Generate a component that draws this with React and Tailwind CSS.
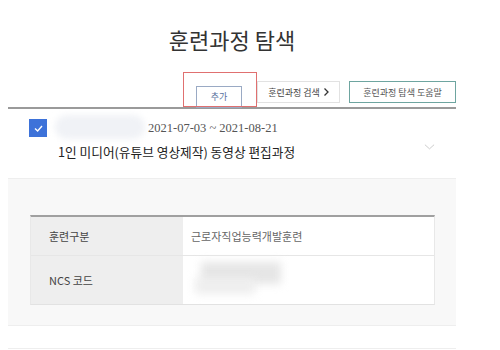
import React from "react";

const font = { fontFamily: '"Noto Sans CJK KR", "Noto Sans", sans-serif' };

const Chevron = ({ className }) => (
  <svg viewBox="0 0 12 6" className={className} fill="none" stroke="currentColor" strokeWidth="1">
    <path d="M1 0.5 L6 5 L11 0.5" />
  </svg>
);

export default function App() {
  return (
    <div className="w-[500px] h-[350px] bg-white overflow-hidden text-[#333]" style={font}>
      <div className="ml-2 w-[448px]">
        {/* title */}
        <h1 className="pt-[23px] h-[81px] text-center text-[22px] leading-[32px] font-normal text-[#333]">
          훈련과정 탐색
        </h1>

        {/* buttons */}
        <div className="flex justify-end items-start h-[28px] border-b-2 border-[#9a9a9a]">
          <div className="relative">
            <button className="w-[46px] h-[22px] border border-[#9aaac4] text-[9px] leading-none text-[#5a72a0]">
              추가
            </button>
            <span className="absolute left-[-13px] top-[-9px] w-[74px] h-[35px] border-[1.5px] border-[#e07070] pointer-events-none" />
          </div>
          <button className="ml-[15px] w-[83px] h-[22px] border border-[#e2e2e2] flex items-center justify-center gap-[4px] text-[9px] leading-none text-[#444]">
            훈련과정 검색
            <svg viewBox="0 0 5 8" className="w-[5px] h-[8px]" fill="none" stroke="#333" strokeWidth="1.3">
              <path d="M0.5 0.5 L4 4 L0.5 7.5" />
            </svg>
          </button>
          <button className="ml-[9px] w-[107px] h-[22px] border border-[#6ea5a0] text-[9px] leading-none text-[#555]">
            훈련과정 탐색 도움말
          </button>
        </div>

        {/* item row */}
        <div className="relative h-[70px] border-b border-[#eeeeee]">
          <div className="flex pl-[21px] pt-[10px]">
            <div className="w-[18px] h-[18px] bg-[#3d72d9] flex items-center justify-center">
              <svg viewBox="0 0 10 8" className="w-[9px] h-[7px]" fill="none" stroke="#fff" strokeWidth="1.6">
                <path d="M1 4 L4 6.8 L9 1.2" />
              </svg>
            </div>
            <div className="ml-[8px] w-[90px] h-[24px] -mt-[4px] rounded-full bg-[#f0f2f6] blur-[3px]" />
            <span className="ml-[3px] mt-[1px] text-[12.5px] leading-[16px] text-[#555]" style={{ fontFamily: '"Liberation Serif", "Noto Sans CJK KR", serif' }}>
              2021-07-03 ~ 2021-08-21
            </span>
          </div>
          <div className="pl-[50px] mt-[3px] text-[12.7px] leading-[20px] text-[#222]">
            1인 미디어(유튜브 영상제작) 동영상 편집과정
          </div>
          <Chevron className="absolute left-[416px] top-[35px] w-[11px] h-[6px] text-[#c8c8c8]" />
        </div>

        {/* detail */}
        <div className="bg-[#f8f8f8] pt-[36px] pl-[22px] pr-[21px] h-[147px] border-b border-[#eeeeee]">
          <div className="border-t-2 border-[#a0a0a0] border-x border-b border-x-[#e8e8e8] border-b-[#e2e2e2] bg-white text-[11px]">
            <div className="flex h-[39px] border-b border-[#e6e6e6]">
              <div className="w-[152px] bg-[#eeeeee] flex items-center pl-[18px] text-[#444]">훈련구분</div>
              <div className="flex items-center pl-[8px] text-[#666]">근로자직업능력개발훈련</div>
            </div>
            <div className="flex h-[48px]">
              <div className="w-[152px] bg-[#eeeeee] flex items-center pl-[18px] text-[#444]">NCS 코드</div>
              <div className="relative flex-1">
                <div className="absolute left-[18px] top-[6px] w-[80px] h-[22px] bg-[#e6e6e6] blur-[4px]" />
                <div className="absolute left-[12px] top-[22px] w-[60px] h-[16px] bg-[#eeeeee] blur-[4px]" />
              </div>
            </div>
          </div>
        </div>

        <div className="h-[23px] border-b border-[#eeeeee]" />
      </div>
    </div>
  );
}
